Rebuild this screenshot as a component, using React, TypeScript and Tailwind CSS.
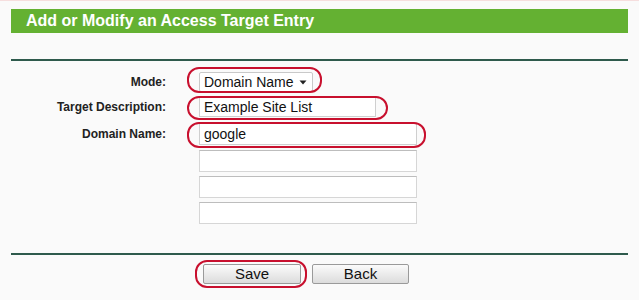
import React from "react";

function Oval({ className }: { className: string }) {
  return <div className={`pointer-events-none absolute border-2 border-[#c8102e] rounded-[12px] ${className}`} />;
}

export default function App() {
  const font = { fontFamily: '"Liberation Sans", Arial, sans-serif' };
  return (
    <div className="w-[639px] h-[300px] bg-[#fafafa] overflow-hidden border-t border-[#f6dede]" style={font}>
      <div className="mx-[11px] mt-[8px] h-[24px] bg-[#64b132] flex items-center pl-[15px]">
        <span className="text-white font-bold text-[16px] leading-none">Add or Modify an Access Target Entry</span>
      </div>
      <div className="mx-[11px] mt-[26px] h-[2px] bg-[#2e5a4c]" />
      <div className="flex mt-[11px]">
        <div className="w-[166px] flex flex-col items-end text-[12px] font-bold text-[#222]">
          <div className="h-[20px] flex items-center">Mode:</div>
          <div className="h-[20px] mt-[5px] flex items-center">Target Description:</div>
          <div className="h-[22px] mt-[6px] flex items-center">Domain Name:</div>
        </div>
        <div className="ml-[33px] flex flex-col text-[14px] text-[#111]">
          <div className="relative w-[114px] h-[20px]">
            <div className="h-full w-full bg-white border border-[#c9c9c9] rounded-[2px] flex items-center pl-[4px] pr-[5px]">
              <span className="flex-1">Domain Name</span>
              <svg width="8" height="5" viewBox="0 0 8 5"><path d="M0.5 0.5h7L4 4.5z" fill="#222" /></svg>
            </div>
            <Oval className="-left-[12px] -top-[5px] -right-[9px] -bottom-[1px]" />
          </div>
          <div className="relative w-[177px] h-[20px] mt-[5px]">
            <div className="h-full w-full bg-white border border-[#cfcfcf] border-t-[#b5b5b5] flex items-center pl-[4px]">Example Site List</div>
            <Oval className="-left-[12px] -top-[1px] -right-[12px] -bottom-[3px]" />
          </div>
          <div className="relative w-[218px] h-[22px] mt-[6px]">
            <div className="h-full w-full bg-white border border-[#cfcfcf] border-t-[#b5b5b5] flex items-center pl-[4px]">google</div>
            <Oval className="-left-[12px] -top-[1px] -right-[9px] -bottom-[3px]" />
          </div>
          <div className="w-[218px] h-[22px] mt-[5px] bg-white border border-[#d6d6d6] border-t-[#bdbdbd]" />
          <div className="w-[218px] h-[22px] mt-[4px] bg-white border border-[#d6d6d6] border-t-[#bdbdbd]" />
          <div className="w-[218px] h-[22px] mt-[4px] bg-white border border-[#d6d6d6] border-t-[#bdbdbd]" />
        </div>
      </div>
      <div className="mx-[11px] mt-[29px] h-[2px] bg-[#2e5a4c]" />
      <div className="flex mt-[9px] pl-[203px] gap-[11px]">
        <div className="relative">
          <button className="w-[98px] h-[20px] text-[15px] text-[#111] border border-[#9a9a9a] rounded-[2px] bg-gradient-to-b from-[#fbfbfb] to-[#dcdcdc] flex items-center justify-center">Save</button>
          <Oval className="-left-[8px] -top-[4px] -right-[6px] -bottom-[4px]" />
        </div>
        <button className="w-[97px] h-[20px] text-[15px] text-[#111] border border-[#9a9a9a] rounded-[2px] bg-gradient-to-b from-[#fbfbfb] to-[#dcdcdc] flex items-center justify-center">Back</button>
      </div>
    </div>
  );
}
